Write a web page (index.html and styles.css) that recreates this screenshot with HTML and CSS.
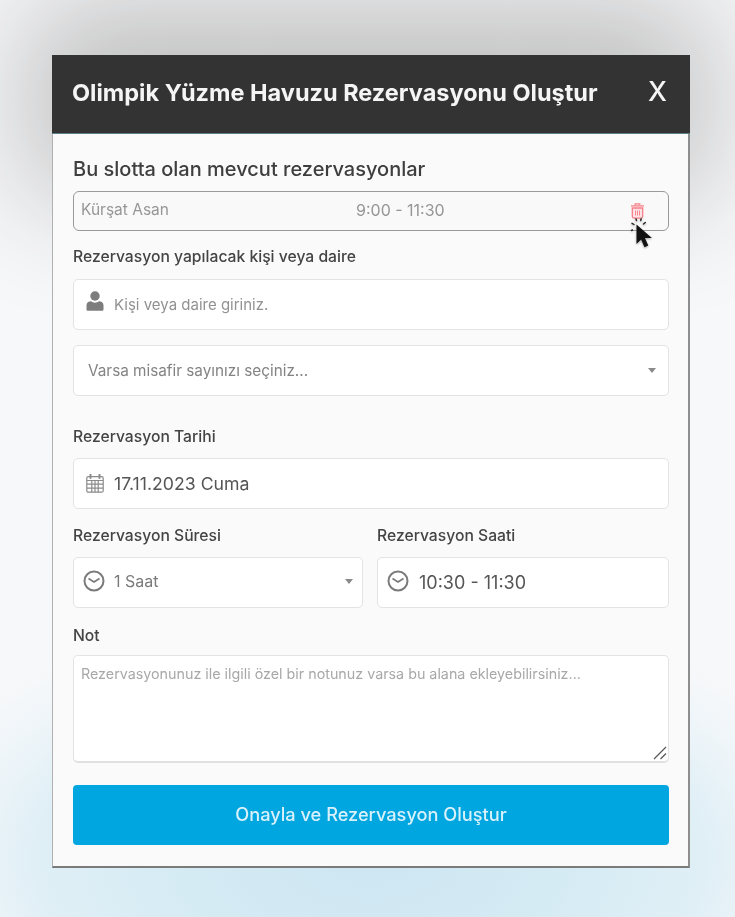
FILE: index.html
```html
<!DOCTYPE html>
<html lang="tr">
<head>
<meta charset="utf-8">
<title>Rezervasyon</title>
<link rel="stylesheet" href="styles.css">
</head>
<body>
<div class="backdrop">
  <section class="modal">
    <header class="modal-head">
      <h1 class="modal-title">Olimpik Yüzme Havuzu Rezervasyonu Oluştur</h1>
      <span class="modal-close">X</span>
    </header>
    <div class="modal-body">
      <h2 class="slot-title">Bu slotta olan mevcut rezervasyonlar</h2>
      <div class="slot-row">
        <span class="slot-name">Kürşat Asan</span>
        <span class="slot-time">9:00 - 11:30</span>
        <span class="slot-action">
          <svg class="trash" width="15" height="16" viewBox="0 0 15 16" fill="none" stroke="#f77f88" stroke-width="1.300">
            <path d="M5.200 2.200V.9h4.600v1.300"/>
            <path d="M1 2.900h13"/>
            <path d="M2.300 5h10.400v8.600c0 .9-.6 1.500-1.500 1.500H3.800c-.9 0-1.500-.6-1.500-1.500z" fill="#fde3e5"/>
            <path d="M5.500 7.500v5M7.500 7.500v5M9.500 7.500v5" stroke-width=".9"/>
          </svg>
          <svg class="cursor" width="26" height="38" viewBox="0 0 26 38">
            <g stroke="#222" stroke-width="1.400" stroke-linecap="round">
              <path d="M3 6.500l-2-1.200M1.500 12l-1.600.5M5.500 2.500L5 1M9.700 2.500l.5-1.700M12.500 6l1.800-1.500"/>
            </g>
            <path d="M5.500 6.500v19.500l4.600-4.600 3.400 7.800 3.800-1.800-3.400-7.500h7z" fill="#111"/>
          </svg>
        </span>
      </div>

      <label class="field-label label-person">Rezervasyon yapılacak kişi veya daire</label>
      <div class="control">
        <svg class="icon icon-person" width="18" height="22" viewBox="0 0 18 22" fill="#7d7d7d">
          <circle cx="9" cy="6" r="4.700"/>
          <path d="M.5 19.500v-4.200c0-2.600 2.200-4 4.500-4 1 .9 2.500 1.400 4 1.400s3-.5 4-1.400c2.300 0 4.500 1.400 4.500 4v4.200c0 .8-.7 1.300-1.500 1.300H2c-.8 0-1.500-.5-1.500-1.300z"/>
        </svg>
        <span class="placeholder">Kişi veya daire giriniz.</span>
      </div>
      <div class="control control-select">
        <span class="select-text">Varsa misafir sayınızı seçiniz...</span>
        <span class="caret"></span>
      </div>

      <label class="field-label label-date">Rezervasyon Tarihi</label>
      <div class="control">
        <svg class="icon icon-cal" width="18" height="19" viewBox="0 0 18 19" fill="none" stroke="#8c8c8c" stroke-width="1.200">
          <rect x=".8" y="2.600" width="16.400" height="15.600" rx="1.500"/>
          <path d="M.8 6.500h16.400M.8 10.200h16.400M.8 14.200h16.400M5.800 6.500v11.700M9 6.500v11.700M12.200 6.500v11.700"/>
          <path d="M4.500 .6v3.500M13.500 .6v3.500" stroke-width="2" stroke-linecap="round"/>
        </svg>
        <span class="value">17.11.2023 Cuma</span>
      </div>

      <div class="split">
        <div class="split-col">
          <label class="field-label">Rezervasyon Süresi</label>
          <div class="control control-duration">
            <svg class="icon icon-clock" width="22" height="22" viewBox="0 0 22 22" fill="none" stroke="#7a7a7a" stroke-width="2">
              <circle cx="11" cy="11" r="9.500"/>
              <path d="M5.500 8.500L11 12l5.500-3.500" stroke-width="1.700"/>
            </svg>
            <span class="select-value">1 Saat</span>
            <span class="caret"></span>
          </div>
        </div>
        <div class="split-col">
          <label class="field-label">Rezervasyon Saati</label>
          <div class="control control-hour">
            <svg class="icon icon-clock" width="22" height="22" viewBox="0 0 22 22" fill="none" stroke="#7a7a7a" stroke-width="2">
              <circle cx="11" cy="11" r="9.500"/>
              <path d="M5.500 8.500L11 12l5.500-3.500" stroke-width="1.700"/>
            </svg>
            <span class="value">10:30 - 11:30</span>
          </div>
        </div>
      </div>

      <label class="field-label label-note">Not</label>
      <div class="note">
        <span class="note-text">Rezervasyonunuz ile ilgili özel bir notunuz varsa bu alana ekleyebilirsiniz...</span>
        <svg class="grip" width="14" height="14" viewBox="0 0 14 14" stroke="#555" stroke-width="1.200" fill="none">
          <path d="M1 13L13 1M7.500 13L13 7.500"/>
        </svg>
      </div>

      <button class="submit" type="button">Onayla ve Rezervasyon Oluştur</button>
    </div>
  </section>
</div>
</body>
</html>
```

FILE: styles.css
```css
* { box-sizing: border-box; }
html, body { margin: 0; padding: 0; height: 100%; }
body {
  font-family: Inter, "Liberation Sans", sans-serif;
  overflow: hidden;
}
.backdrop {
  position: relative;
  overflow: hidden;
  width: 735px;
  height: 917px;
  padding: 55px 45px 0 52px;
  background:
    radial-gradient(ellipse 480px 260px at 370px 860px, #cde6f2 0, #d5ebf4 40%, #e0eff6 70%, #eef5f9 85%, rgba(247,248,250,0) 100%),
    #f7f8fa;
}
.backdrop::before {
  content: "";
  position: absolute;
  left: 84px;
  top: 60px;
  width: 567px;
  height: 80px;
  background: #c0c0c0;
  box-shadow: 0 0 120px 60px #c0c0c0;
}
.modal {
  position: relative;
  width: 638px;
  height: 813px;
  background: #fafafa;
  border-right: 2px solid #8e8e8e;
  border-bottom: 2px solid #7b7b7b;
  border-left: 1px solid #b0b0b0;
  filter: blur(.5px);
  display: flex;
  flex-direction: column;
}
.modal-head {
  height: 79px;
  flex: none;
  background: #333;
  border-bottom: 1px solid #5b7d88;
  display: flex;
  align-items: center;
  justify-content: space-between;
  padding: 0 23px 3px 20px;
  margin: 0 -2px 0 -1px;
}
.modal-title {
  margin: 0;
  font-size: 23.500px;
  font-weight: 700;
  color: #f5f5f5;
  white-space: nowrap;
}
.modal-close {
  font-size: 27px;
  font-weight: 500;
  color: #f5f5f5;
  margin-bottom: 3px;
}
.modal-body {
  padding: 23px 19px 0 20px;
  display: flex;
  flex-direction: column;
}
.slot-title {
  margin: 0;
  height: 24px;
  line-height: 24px;
  font-size: 20px;
  font-weight: 500;
  color: #3e3e3e;
  white-space: nowrap;
}
.slot-row {
  position: relative;
  margin-top: 10px;
  height: 40px;
  background: #f9f9f9;
  border: 1.500px solid #9a9a9a;
  border-radius: 6px;
  display: flex;
  align-items: center;
  padding: 0 7px 3px;
  font-size: 15.500px;
  color: #969696;
}
.slot-name { width: 275px; }
.slot-time { width: 274px; font-size: 16px; }
.slot-action { width: 20px; height: 16px; position: relative; margin-top: 3px; }
.trash { position: absolute; left: 0; top: 0; }
.cursor { position: absolute; left: 1px; top: 15px; filter: drop-shadow(0 1px 1px rgba(0,0,0,.35)); }
.field-label {
  display: block;
  height: 20px;
  line-height: 20px;
  font-size: 15.700px;
  font-weight: 500;
  color: #444;
  white-space: nowrap;
}
.label-person { margin-top: 16px; }
.label-date { margin-top: 31px; }
.label-note { margin-top: 18px; }
.control {
  margin-top: 12px;
  height: 51px;
  background: #fff;
  border: 1px solid #e3e3e3;
  border-radius: 5px;
  display: flex;
  align-items: center;
  padding: 0 12px;
  position: relative;
}
.label-date + .control { margin-top: 11px; }
.control-select { margin-top: 15px; padding: 0 12px 0 14px; }
.icon { flex: none; }
.icon-person { margin-top: -8px; }
.placeholder {
  margin-left: 10px;
  font-size: 15px;
  color: #929292;
}
.select-text { font-size: 15.300px; color: #838383; flex: 1; }
.select-value { font-size: 16px; color: #7a7a7a; flex: 1; margin: -4px 0 0 9px; }
.caret {
  width: 0;
  height: 0;
  border-left: 4px solid transparent;
  border-right: 4px solid transparent;
  border-top: 5px solid #8a8a8a;
}
.value {
  margin-left: 10px;
  font-size: 17.700px;
  color: #555;
}
.split {
  margin-top: 17px;
  display: grid;
  grid-template-columns: 290px 292px;
  column-gap: 14px;
}
.split .control { margin-top: 11px; }
.control-duration { padding: 0 9px; }
.control-duration .icon { margin-top: -4px; }
.control-duration .caret { margin-top: -3px; }
.control-hour { padding: 0 9px; }
.control-hour .icon { margin-top: -4px; }
.control-hour .value { font-size: 18px; }
.note {
  position: relative;
  margin-top: 9px;
  height: 108px;
  background: #fff;
  border: 1px solid #e3e3e3;
  border-bottom: 2px solid #e0e0e0;
  border-radius: 5px;
  padding: 9px 7px;
  font-size: 14.300px;
  color: #a8a8a8;
  white-space: nowrap;
}
.grip { position: absolute; right: 1px; bottom: 1px; }
.submit {
  margin-top: 22px;
  height: 60px;
  background: #00a6e0;
  border: 0;
  border-radius: 4px;
  font-family: inherit;
  font-size: 18.200px;
  font-weight: 500;
  color: #d8f1fb;
  padding: 0 0 2px;
}
```
